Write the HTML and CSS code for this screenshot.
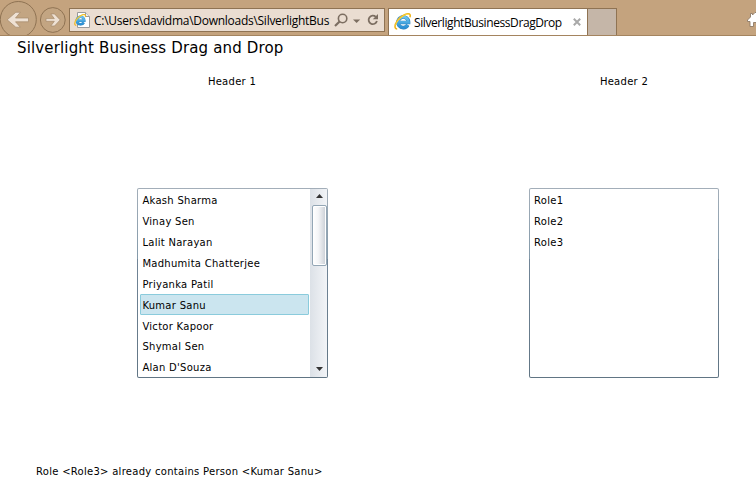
FILE: index.html
```html
<!DOCTYPE html>
<html lang="en">
<head>
<meta charset="utf-8">
<title>SilverlightBusinessDragDrop</title>
<link rel="stylesheet" href="styles.css">
</head>
<body>
<svg class="defs" width="0" height="0" aria-hidden="true">
  <defs>
    <linearGradient id="blue" x1="0" y1="0" x2="0" y2="1"><stop offset="0" stop-color="#6cc4ee"/><stop offset="1" stop-color="#2a8fd4"/></linearGradient>
    <symbol id="ie" viewBox="0 0 16 16">
      <path d="M13 11.300A5 5 0 1 1 13.700 8.900H5" fill="none" stroke="#2f83bd" stroke-width="3.400"/>
      <path d="M13 11.300A5 5 0 1 1 13.700 8.900H5" fill="none" stroke="url(#blue)" stroke-width="2.600"/>
      <path d="M3 15C.3 15 .2 11.300 3.200 7.200 6.500 2.800 12.800-.6 14.800 1.200c.7.700.5 1.800.2 2.800" fill="none" stroke="#efb51a" stroke-width="1.500"/>
      <path d="M1.500 11.600C2 9.800 3.200 7.600 5.400 5.300 8 2.600 11.800.8 13.700 1" fill="none" stroke="#ffe14a" stroke-width=".7"/>
    </symbol>
  </defs>
</svg>
<header class="chrome">
  <svg class="nav" width="69" height="35" viewBox="0 0 69 35">
    <circle cx="18.300" cy="19.500" r="18" fill="#c3a582" stroke="#8f7353"/>
    <path d="M28.500 18v3.800H15.500l4.800 5.400h-4.500L7.200 19.800l8.600-7.500h4.500L15.500 18z" fill="#eee1d4" stroke="#a58a6c" stroke-width=".7"/>
    <circle cx="52.800" cy="20" r="12.400" fill="#c3a582" stroke="#8f7353"/>
    <path d="M46 18.600v2.700h8.300L50.800 26h3.700l5.700-6.100-5.700-6h-3.700l3.500 4.700z" fill="#eee1d4" stroke="#a58a6c" stroke-width=".7"/>
  </svg>
  <div class="address">
    <svg class="page-icon" width="16" height="16" viewBox="0 0 16 16">
      <path d="M3.500.5h8l4 4v11h-12z" fill="#fff" stroke="#9b9b9b"/>
      <path d="M11.500.5v4h4" fill="#eee" stroke="#9b9b9b"/>
      <use href="#ie" x="0" y="2" width="12" height="12"/>
    </svg>
    <span class="url">C:\Users\davidma\Downloads\SilverlightBus</span>
    <svg class="tools" width="47" height="16" viewBox="0 0 47 16">
      <circle cx="8.600" cy="6.500" r="4.200" fill="none" stroke="#7c6e61" stroke-width="1.600"/>
      <path d="M5.600 9.500L1 14" stroke="#7c6e61" stroke-width="2.200"/>
      <path d="M19 7.500h7.200l-3.600 3.600z" fill="#7c6e61"/>
      <path d="M41.800 4.900A4.200 4.200 0 1 0 42.900 9" fill="none" stroke="#7c6e61" stroke-width="1.800"/>
      <path d="M44 2v5.200h-5.200z" fill="#7c6e61"/>
    </svg>
  </div>
  <div class="tab">
    <svg class="tab-icon" width="17" height="17"><use href="#ie" width="17" height="17"/></svg>
    <span class="tab-title">SilverlightBusinessDragDrop</span>
    <svg class="close" width="8" height="8" viewBox="0 0 8 8"><path d="M.8.8l6.400 6.400M7.200.8L.8 7.200" stroke="#a9a9a9" stroke-width="2"/></svg>
  </div>
  <div class="new-tab"></div>
  <svg class="home" width="9" height="15" viewBox="0 0 9 15">
    <path d="M10 .5H8L5.500 3V1.500h-2v3.500L.5 8v1.500H3v5h3.500v-4H10z" fill="#fff" stroke="#8f7b66" stroke-width=".9"/>
  </svg>
</header>
<main class="app">
  <h1 class="title"><span>Silverlight Business Drag and Drop</span></h1>
  <div class="columns">
    <section class="column">
      <h2 class="heading"><span>Header 1</span></h2>
      <div class="frame">
        <div class="list">
          <ul class="items">
            <li><span>Akash Sharma</span></li>
            <li><span>Vinay Sen</span></li>
            <li><span>Lalit Narayan</span></li>
            <li><span>Madhumita Chatterjee</span></li>
            <li><span>Priyanka Patil</span></li>
            <li class="selected"><span>Kumar Sanu</span></li>
            <li><span>Victor Kapoor</span></li>
            <li><span>Shymal Sen</span></li>
            <li><span>Alan D'Souza</span></li>
          </ul>
          <div class="scrollbar">
            <svg class="arrow" width="7" height="4"><path d="M0 4h7L3.500 0z" fill="#333"/></svg>
            <div class="thumb"></div>
            <svg class="arrow down" width="7" height="4"><path d="M0 0h7L3.500 4z" fill="#333"/></svg>
          </div>
        </div>
      </div>
    </section>
    <section class="column">
      <h2 class="heading"><span>Header 2</span></h2>
      <div class="frame">
        <div class="list">
          <ul class="items">
            <li><span>Role1</span></li>
            <li><span>Role2</span></li>
            <li><span>Role3</span></li>
          </ul>
        </div>
      </div>
    </section>
  </div>
  <p class="status"><span>Role &lt;Role3&gt; already contains Person &lt;Kumar Sanu&gt;</span></p>
</main>
</body>
</html>
```
FILE: styles.css
```css
* { box-sizing: border-box; margin: 0; padding: 0; }
html, body { width: 756px; height: 487px; overflow: hidden; background: #fff; }
body { font: 10px/14px "DejaVu Sans", Verdana, sans-serif; letter-spacing: .28px; color: #000; }
.defs { display: block; height: 0; }
svg { display: block; flex: none; }

.chrome { display: flex; height: 36px; background: #c4a37e; border-bottom: 1px solid #a4845f; font: 12px/16px "Open Sans", "Segoe UI", sans-serif; }
.address { display: flex; align-items: center; width: 316px; height: 24px; margin-top: 8px; padding-left: 4px; border: 1px solid #8f7353; background: #eaddd1; }
.url { width: 235px; margin: 2px 0 0 4px; white-space: nowrap; letter-spacing: -.27px; }
.tools { margin-left: 5px; }
.tab { display: flex; align-items: center; width: 200px; height: 27px; margin: 8px 0 0 3px; padding-left: 5px; border: 1px solid #8f7353; border-bottom: 0; background: #fff; }
.tab-icon { margin-top: -2px; }
.tab-title { width: 150px; margin: 2px 0 0 3px; white-space: nowrap; letter-spacing: -.41px; }
.close { margin-left: 9px; }
.new-tab { width: 29px; height: 27px; margin-top: 8px; border: 1px solid #8f7353; border-width: 1px 1px 0 0; background: #c5b6a8; }
.home { margin: 12px 0 0 auto; }

.title { height: 41px; padding: 2px 0 0 17px; font-size: 15px; line-height: 20px; font-weight: 400; letter-spacing: .15px; }
.columns { display: grid; grid-template-columns: 191px 190px; column-gap: 201px; padding-left: 137px; }
.column { display: flex; flex-direction: column; height: 301px; }
.heading { height: 111px; font-size: 10px; line-height: 10px; font-weight: 400; text-align: center; }
.column:first-child .heading { padding-right: 1px; }
.frame { height: 190px; padding: 1px; border-radius: 2px; background: linear-gradient(#a3aeb9, #8399a9 37.5%, #718597 37.5%, #617584); }
.list { display: flex; height: 188px; border-radius: 1px; background: #fff; overflow: hidden; }
.items { flex: 1; padding: 1px; list-style: none; }
.items li { height: 20.860px; padding: 3.400px 0 0 2px; border: 1px solid transparent; line-height: 14px; }
.column:first-child .items { padding-left: 2px; }
.column:first-child .items li { padding-left: 1.400px; }
.items .selected { border-color: #8acbdc; border-radius: 1px; background: #cbe5ef; }
.scrollbar { display: flex; flex-direction: column; align-items: center; width: 17px; height: 188px; padding: 5px 0 6px 1px; background: linear-gradient(90deg, #dce1e7, #f2f4f7); }
.thumb { width: 15px; height: 61px; margin-top: 7px; border: 1px solid #93a6b5; border-radius: 2px; background: linear-gradient(90deg, #fff, #f4f5f7 40%, #c9ced5); box-shadow: inset 0 0 0 1px #fff; }
.down { margin-top: auto; }
.status { padding: 87px 0 0 36px; }
```
